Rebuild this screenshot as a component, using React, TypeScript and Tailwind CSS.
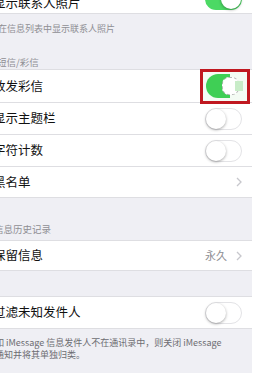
import React from "react"

const font = { fontFamily: '"Noto Sans CJK SC", "Noto Sans", sans-serif' }

function Toggle({ on = false }: { on?: boolean }) {
  if (on) {
    return (
      <div className="relative h-[22px] w-[37px] rounded-full bg-[#4cd964]">
        <div className="absolute right-[1px] top-[1px] h-[20px] w-[20px] rounded-full bg-white shadow-[0_1px_3px_rgba(0,0,0,0.35)]" />
      </div>
    )
  }
  return (
    <div className="relative h-[22px] w-[37px] rounded-full border border-[#e3e3e6] bg-white">
      <div className="absolute left-0 top-0 h-[20px] w-[20px] rounded-full bg-white shadow-[0_1px_3px_rgba(0,0,0,0.35)]" />
    </div>
  )
}

function Chevron() {
  return (
    <svg width="6" height="10" viewBox="0 0 6 10" className="shrink-0">
      <path d="M1 1l4 4-4 4" fill="none" stroke="#c7c7cc" strokeWidth="1.3" />
    </svg>
  )
}

function Row({ label, children, last = false, h = "h-[32px]" }: { label: string; children?: React.ReactNode; last?: boolean; h?: string }) {
  return (
    <div className={`flex items-center justify-between bg-white pr-[10px] ${h} ${last ? "" : "border-b border-[#dedee2]"}`}>
      <span className="-ml-[7px] text-[12.5px] text-[#111]">{label}</span>
      {children}
    </div>
  )
}

export default function App() {
  return (
    <div className="flex h-[373px] w-[279px] overflow-hidden bg-white" style={font}>
      <div className="w-[252px] shrink-0 bg-[#efeff4]">
        {/* top row, cut off */}
        <div className="flex h-[14px] items-end justify-between overflow-hidden border-b border-[#dedee2] bg-white pr-[10px]">
          <span className="-ml-[7px] mb-[2px] text-[12.5px] leading-[16px] text-[#111]">显示联系人照片</span>
          <div className="mb-[3px]">
            <Toggle on />
          </div>
        </div>

        <div className="h-[55px] text-[9px] text-[#8e8e93]">
          <div className="-ml-[2px] pt-[8px]">在信息列表中显示联系人照片</div>
          <div className="-ml-[3px] pt-[19px] text-[9.5px]">短信/彩信</div>
        </div>

        <div className="border-t border-[#dedee2]">
          <Row label="致发彩信" h="h-[33px]">
            <div className="-mr-[8px] flex h-[35px] w-[50px] items-center justify-center border-[3px] border-[#c01820] bg-[#f4fbf4]">
              <div className="relative h-[24px] w-[38px]">
                <div className="absolute left-0 top-0 h-[24px] w-[24px] rounded-l-full rounded-r-[4px] bg-[#3fcf55]" />
                <div className="absolute left-[16px] top-[3px] h-[18px] w-[17px] rounded-[7px] border border-dashed border-[#b8b8b8] bg-white" />
                <div className="absolute left-[29px] top-[7px] h-[10px] w-[8px] bg-[#c8ecc8]" />
              </div>
            </div>
          </Row>
          <Row label="显示主题栏">
            <Toggle />
          </Row>
          <Row label="字符计数">
            <Toggle />
          </Row>
          <Row label="黑名单" h="h-[30px]" last>
            <Chevron />
          </Row>
        </div>

        <div className="h-[43px] border-t border-[#dedee2] text-[9.5px] text-[#8e8e93]">
          <div className="-ml-[6px] pt-[24px]">信息历史记录</div>
        </div>

        <div className="border-y border-[#dedee2]">
          <Row label="保留信息" h="h-[29px]" last>
            <div className="flex items-center gap-[9px]">
              <span className="text-[11px] text-[#8e8e93]">永久</span>
              <Chevron />
            </div>
          </Row>
        </div>

        <div className="h-[25px]" />

        <div className="border-y border-[#dedee2]">
          <Row label="过滤未知发件人" h="h-[31px]" last>
            <Toggle />
          </Row>
        </div>

        <div className="-ml-[5px] pt-[8px] text-[9px] leading-[12px] text-[#6d6d72]">
          <div>如 iMessage 信息发件人不在通讯录中，则关闭 iMessage</div>
          <div>通知并将其单独归类。</div>
        </div>
      </div>
      <div className="flex-1 bg-white" />
    </div>
  )
}
